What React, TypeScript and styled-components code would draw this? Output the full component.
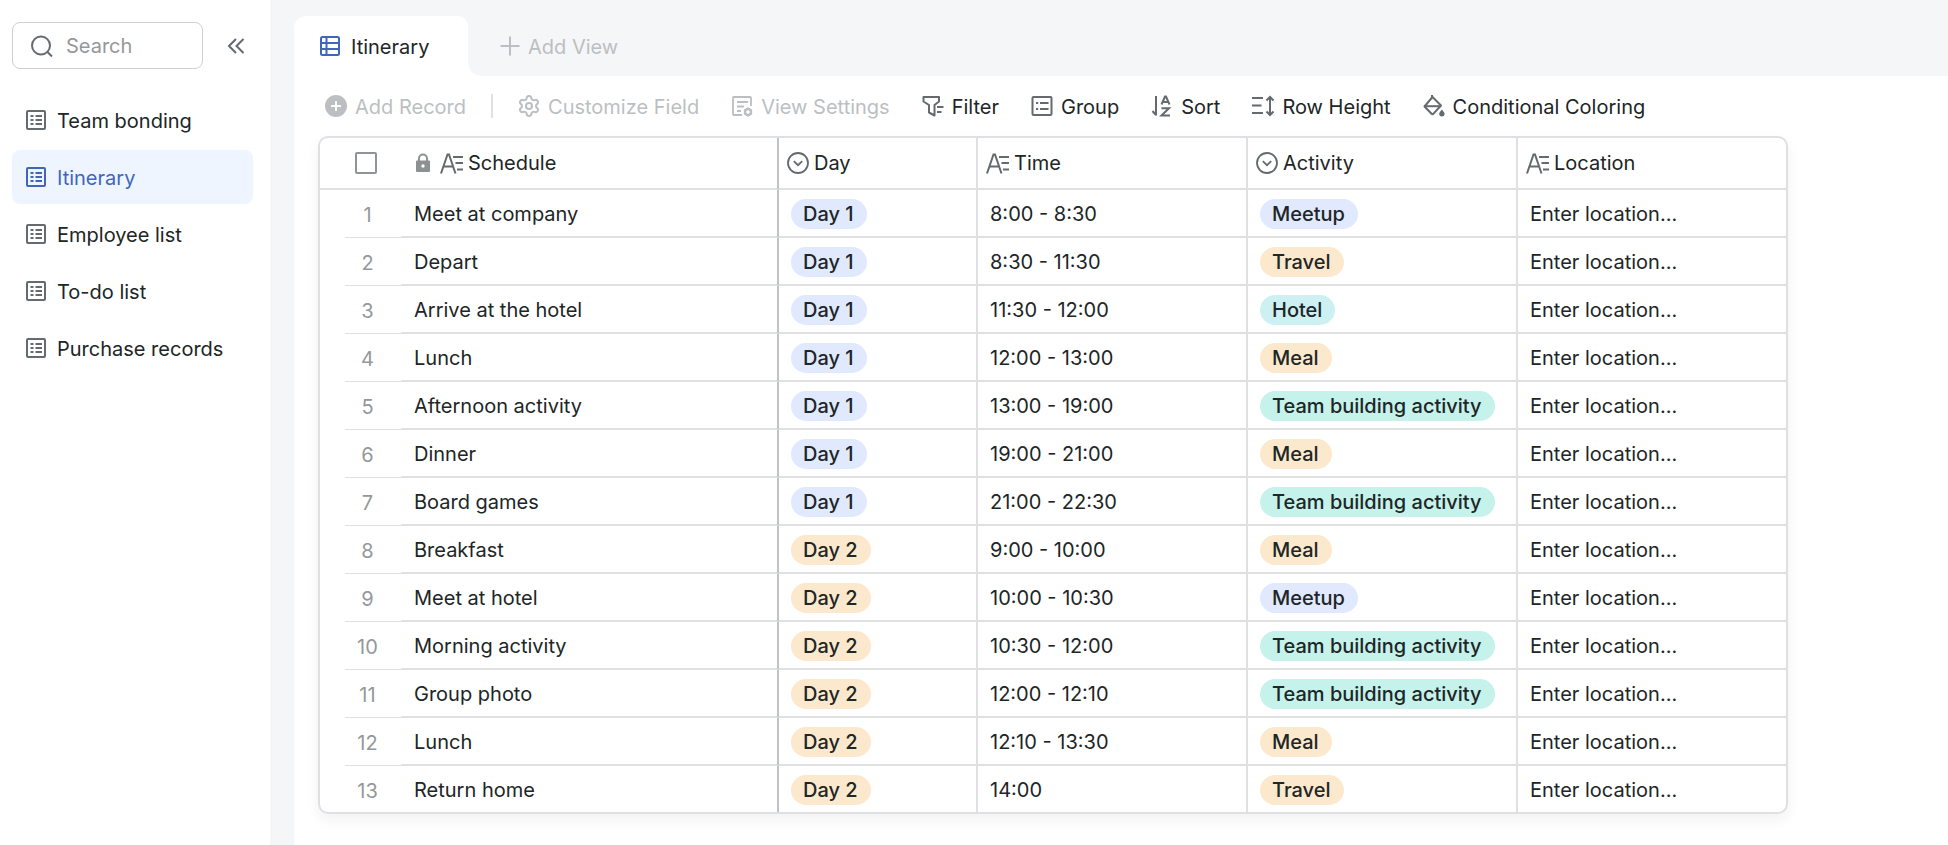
import React from 'react';
import styled, { createGlobalStyle, css } from 'styled-components';
import { Settings } from 'lucide-react';

const ink = '#202526';
const iconGray = '#646a6d';
const muted = '#bbbfc2';
const line = '#dee0e3';
const canvas = '#f5f6f8';
const accent = '#3f66ba';

const GlobalStyle = createGlobalStyle`
  *, *::before, *::after { box-sizing: border-box; }
  body {
    margin: 0;
    background: #fff;
    color: ${ink};
    font-family: Inter, "Liberation Sans", sans-serif;
    font-size: 20px;
    line-height: 24px;
  }
  button, input { font: inherit; color: inherit; }
  button { border: 0; padding: 0; background: none; cursor: pointer; }
  svg { display: block; flex: none; }
`;

const Shell = styled.div`
  display: flex;
  min-height: 100vh;
  background: ${canvas};
`;

const Sidebar = styled.aside`
  flex: none;
  width: 270px;
  padding: 22px 17px 22px 12px;
  background: #fff;
`;

const SearchRow = styled.div`
  display: flex;
  align-items: center;
  gap: 24px;
  color: ${iconGray};
`;

const SearchBox = styled.label`
  display: flex;
  align-items: center;
  gap: 13px;
  width: 191px;
  height: 47px;
  padding: 0 18px;
  border: 1px solid #cdd0d3;
  border-radius: 8px;
`;

const SearchInput = styled.input`
  flex: 1;
  min-width: 0;
  padding: 0;
  border: 0;
  outline: 0;
  background: none;
  &::placeholder { color: #94989b; opacity: 1; }
`;

const NavList = styled.nav`
  display: flex;
  flex-direction: column;
  gap: 3px;
  margin-top: 24px;
`;

const NavLink = styled.a<{ $active?: boolean }>`
  display: flex;
  align-items: center;
  gap: 9px;
  height: 54px;
  padding: 0 12px;
  border-radius: 8px;
  white-space: nowrap;
  text-decoration: none;
  color: ${p => (p.$active ? accent : ink)};
  background: ${p => (p.$active ? '#eff5ff' : 'transparent')};
  svg { color: ${p => (p.$active ? accent : iconGray)}; }
`;

const Label = styled.span`
  padding-top: 2px;
`;

const Main = styled.main`
  display: flex;
  flex-direction: column;
  flex: 1;
  min-width: 0;
  margin-left: 24px;
`;

const TabBar = styled.div`
  display: flex;
  height: 76px;
  padding-top: 16px;
`;

const Tab = styled.button`
  position: relative;
  display: flex;
  align-items: center;
  gap: 11px;
  width: 174px;
  padding: 0 0 0 26px;
  border-radius: 12px 10px 0 0;
  background: #fff;
  svg { color: ${accent}; }
  &::after {
    content: '';
    position: absolute;
    left: 100%;
    bottom: 0;
    width: 12px;
    height: 12px;
    background: radial-gradient(circle at 100% 0, transparent 11px, #fff 12px);
  }
`;

const AddView = styled.button`
  display: flex;
  align-items: center;
  gap: 8px;
  margin-left: 32px;
  color: ${muted};
`;

const Panel = styled.section`
  flex: 1;
  padding: 0 24px 31px;
  background: #fff;
`;

const Toolbar = styled.div`
  display: flex;
  align-items: center;
  gap: 32px;
  height: 60px;
  padding-left: 7px;
`;

const Tool = styled.button<{ $muted?: boolean }>`
  display: flex;
  align-items: center;
  gap: 8px;
  white-space: nowrap;
  color: ${p => (p.$muted ? muted : ink)};
  svg { color: ${p => (p.$muted ? muted : iconGray)}; }
`;

const Divider = styled.span`
  width: 2px;
  height: 24px;
  margin: 0 -7px;
  background: ${line};
`;

const Sheet = styled.div`
  width: 1470px;
  border: 2px solid ${line};
  border-radius: 10px;
  box-shadow: 0 6px 14px rgba(31, 35, 41, 0.06);
  overflow: hidden;
`;

const Grid = styled.table`
  width: 100%;
  table-layout: fixed;
  border-collapse: separate;
  border-spacing: 0;
`;

const cellLines = css<{ $pinned?: boolean }>`
  border-bottom: 2px solid ${line};
  border-right: 2px solid ${p => (p.$pinned ? '#bfc3c6' : line)};
  &:last-child { border-right: 0; }
`;

const HeadCell = styled.th<{ $pinned?: boolean; $indent?: boolean }>`
  ${cellLines}
  height: 52px;
  padding: 0 0 0 ${p => (p.$indent ? 14 : 8)}px;
  font-weight: 400;
  text-align: left;
`;

const HeadLabel = styled.span`
  display: flex;
  align-items: center;
  gap: 5px;
  svg { color: ${iconGray}; }
`;

const LockSlot = styled.span`
  display: flex;
  margin-right: 4px;
  && svg { color: #8c9192; }
`;

const CheckCell = styled.th`
  height: 52px;
  padding: 0 0 0 35px;
  border-bottom: 2px solid ${line};
`;

const Check = styled.input`
  display: block;
  appearance: none;
  width: 22px;
  height: 22px;
  margin: 0;
  border: 2px solid #8f9596;
  border-radius: 2px;
`;

const Row = styled.tr`
  &:last-child > * { border-bottom: 0; height: 46px; }
  &:last-child > * > div { border-bottom: 0; height: 46px; }
`;

const NumberCell = styled.th`
  padding: 0 0 0 25px;
  font-weight: 400;
`;

const NumberBox = styled.div`
  height: 48px;
  padding: 13px 11px 0 0;
  border-bottom: 1px solid ${line};
  text-align: center;
  color: #94989b;
`;

const Cell = styled.td<{ $pinned?: boolean }>`
  ${cellLines}
  height: 48px;
  padding: 2px 0 0 ${p => (p.$pinned ? 13 : 12)}px;
  white-space: nowrap;
`;

const tones = {
  blue: '#e0e9fe',
  orange: '#fce9cd',
  cyan: '#cdf1f3',
  teal: '#c5f2ea',
};
type Tone = keyof typeof tones;

const Pill = styled.span<{ $tone: Tone }>`
  display: block;
  width: fit-content;
  height: 30px;
  padding: 0 13px 0 12px;
  border-radius: 15px;
  line-height: 30px;
  font-weight: 500;
  background: ${p => tones[p.$tone]};
`;

const Stroke = ({ size = 22, w = 2, children }: { size?: number; w?: number; children: React.ReactNode }) => (
  <svg width={size} height={size} viewBox={`0 0 ${size} ${size}`} fill="none" stroke="currentColor" strokeWidth={w} aria-hidden="true">
    {children}
  </svg>
);

const SearchIcon = () => (
  <Stroke>
    <circle cx="10" cy="10.500" r="9" />
    <path d="M16.500 17l4.500 4.500" />
  </Stroke>
);
const CollapseIcon = () => (
  <Stroke size={18}>
    <path d="M9 2L2 9l7 7M16.500 2l-7 7 7 7" />
  </Stroke>
);
const ListIcon = () => (
  <Stroke size={24}>
    <rect x="3" y="3" width="18" height="18" rx="1" />
    <path d="M6.500 8h3M6.500 12h3M6.500 16h3M11.500 8h6.500M11.500 12h6.500M11.500 16h6.500" />
  </Stroke>
);
const GridIcon = () => (
  <Stroke size={20}>
    <rect x="1" y="1" width="18" height="18" rx="1.500" />
    <path d="M1 7h18M1 13h18M6.500 1v18" />
  </Stroke>
);
const PlusIcon = () => (
  <Stroke size={20}>
    <path d="M10 .5v19M.5 10h19" />
  </Stroke>
);
const AddIcon = () => (
  <Stroke>
    <circle cx="11" cy="11" r="11" fill="currentColor" stroke="none" />
    <path d="M11 6v10M6 11h10" stroke="#fff" />
  </Stroke>
);
const GearIcon = () => <Settings size={22} viewBox="1 1 22 22" strokeWidth={2} aria-hidden="true" />;
const ViewIcon = () => (
  <Stroke w={1.8}>
    <path d="M20 11V3a1 1 0 0 0-1-1H3a1 1 0 0 0-1 1v16a1 1 0 0 0 1 1h8" />
    <path d="M6 7h11M6 11.500h7M6 16h4" />
    <circle cx="17" cy="17" r="3" strokeWidth="2.400" />
    <path d="M17 12.400v2M17 19.600v2M13 14.700l1.700 1M19.300 18.300l1.700 1M13 19.300l1.700-1M19.300 15.700l1.700-1" />
  </Stroke>
);
const FilterIcon = () => (
  <Stroke>
    <path d="M1.500 2h15.500v4.500l-4.500 3.500v10.500l-5.500-3v-7.500l-5.500-3.500z" strokeLinejoin="round" />
    <path d="M15 12h6.500M15 17h4.500" />
  </Stroke>
);
const GroupIcon = () => (
  <Stroke>
    <rect x="1.500" y="2" width="19" height="18" rx="1" />
    <path d="M5 8h2.200M9 8h8.500M5 14h2.200M9 14h8.500" />
  </Stroke>
);
const SortIcon = () => (
  <Stroke>
    <path d="M5 1v19.500M1.500 16l3.500 4" />
    <path d="M10.500 9.500L14 1.500h1l3.500 8M11.800 7h5.400M10.500 13.300H18l-7.500 7.200h8.500" />
  </Stroke>
);
const HeightIcon = () => (
  <Stroke>
    <path d="M0 3h11M0 10.500h9.500M0 18h11M18 2v18M14.500 5.500L18 2l3.500 3.500M14.500 16.500L18 20l3.500-3.500" />
  </Stroke>
);
const ColorIcon = () => (
  <Stroke>
    <path d="M9 0v2.500M9.500 2L18 10.500l-7.500 8.200a1.500 1.500 0 0 1-2 0L1.500 11.500z" strokeLinejoin="round" />
    <path d="M1.500 11.200h16.500" />
    <path d="M18.800 14.500c1.600 2 2.800 3 2.800 4.300a2.700 2.700 0 0 1-5.400 0c0-1.300 1.200-2.300 2.600-4.300z" fill="currentColor" stroke="none" />
  </Stroke>
);
const TextFieldIcon = () => (
  <Stroke size={23}>
    <path d="M1 21.500L7.500 2.500h1.500l6.500 19M3.500 14.500h9.500M13 5h10M15.500 11H23M17 17.500h6" />
  </Stroke>
);
const SelectIcon = () => (
  <Stroke w={1.8}>
    <circle cx="11" cy="11" r="10" />
    <path d="M6.800 9.200L11 13.200l4.200-4" />
  </Stroke>
);
const LockIcon = () => (
  <svg width="16" height="20" viewBox="0 0 16 20" fill="none" aria-hidden="true">
    <path d="M4 9V5.500a4 4 0 0 1 8 0V9" stroke="currentColor" strokeWidth="2" />
    <rect x="1" y="7.500" width="14" height="11.500" rx="1" fill="currentColor" />
    <circle cx="8" cy="13" r="1.700" fill="#fff" />
  </svg>
);

const sheets = ['Team bonding', 'Itinerary', 'Employee list', 'To-do list', 'Purchase records'];

const activityTones: Record<string, Tone> = {
  Meetup: 'blue',
  Travel: 'orange',
  Hotel: 'cyan',
  Meal: 'orange',
  'Team building activity': 'teal',
};

const records: [string, number, string, string][] = [
  ['Meet at company', 1, '8:00 - 8:30', 'Meetup'],
  ['Depart', 1, '8:30 - 11:30', 'Travel'],
  ['Arrive at the hotel', 1, '11:30 - 12:00', 'Hotel'],
  ['Lunch', 1, '12:00 - 13:00', 'Meal'],
  ['Afternoon activity', 1, '13:00 - 19:00', 'Team building activity'],
  ['Dinner', 1, '19:00 - 21:00', 'Meal'],
  ['Board games', 1, '21:00 - 22:30', 'Team building activity'],
  ['Breakfast', 2, '9:00 - 10:00', 'Meal'],
  ['Meet at hotel', 2, '10:00 - 10:30', 'Meetup'],
  ['Morning activity', 2, '10:30 - 12:00', 'Team building activity'],
  ['Group photo', 2, '12:00 - 12:10', 'Team building activity'],
  ['Lunch', 2, '12:10 - 13:30', 'Meal'],
  ['Return home', 2, '14:00', 'Travel'],
];

export default function App() {
  return (
    <Shell>
      <GlobalStyle />
      <Sidebar>
        <SearchRow>
          <SearchBox>
            <SearchIcon />
            <SearchInput type="text" placeholder="Search" aria-label="Search" />
          </SearchBox>
          <button type="button" aria-label="Collapse sidebar"><CollapseIcon /></button>
        </SearchRow>
        <NavList>
          {sheets.map(name => (
            <NavLink key={name} href="#" $active={name === 'Itinerary'}>
              <ListIcon />
              <Label>{name}</Label>
            </NavLink>
          ))}
        </NavList>
      </Sidebar>
      <Main>
        <TabBar>
          <Tab type="button"><GridIcon /><Label>Itinerary</Label></Tab>
          <AddView type="button"><PlusIcon /><Label>Add View</Label></AddView>
        </TabBar>
        <Panel>
          <Toolbar>
            <Tool type="button" $muted><AddIcon /><Label>Add Record</Label></Tool>
            <Divider />
            <Tool type="button" $muted><GearIcon /><Label>Customize Field</Label></Tool>
            <Tool type="button" $muted><ViewIcon /><Label>View Settings</Label></Tool>
            <Tool type="button"><FilterIcon /><Label>Filter</Label></Tool>
            <Tool type="button"><GroupIcon /><Label>Group</Label></Tool>
            <Tool type="button"><SortIcon /><Label>Sort</Label></Tool>
            <Tool type="button"><HeightIcon /><Label>Row Height</Label></Tool>
            <Tool type="button"><ColorIcon /><Label>Conditional Coloring</Label></Tool>
          </Toolbar>
          <Sheet>
            <Grid>
              <colgroup>
                <col width="81" />
                <col width="378" />
                <col width="199" />
                <col width="270" />
                <col width="270" />
                <col />
              </colgroup>
              <thead>
                <tr>
                  <CheckCell><Check type="checkbox" aria-label="Select all records" /></CheckCell>
                  <HeadCell $pinned $indent>
                    <HeadLabel><LockSlot><LockIcon /></LockSlot><TextFieldIcon />Schedule</HeadLabel>
                  </HeadCell>
                  <HeadCell><HeadLabel><SelectIcon />Day</HeadLabel></HeadCell>
                  <HeadCell><HeadLabel><TextFieldIcon />Time</HeadLabel></HeadCell>
                  <HeadCell><HeadLabel><SelectIcon />Activity</HeadLabel></HeadCell>
                  <HeadCell><HeadLabel><TextFieldIcon />Location</HeadLabel></HeadCell>
                </tr>
              </thead>
              <tbody>
                {records.map(([title, day, time, activity], i) => (
                  <Row key={i}>
                    <NumberCell scope="row"><NumberBox>{i + 1}</NumberBox></NumberCell>
                    <Cell $pinned>{title}</Cell>
                    <Cell><Pill $tone={day === 1 ? 'blue' : 'orange'}>Day {day}</Pill></Cell>
                    <Cell>{time}</Cell>
                    <Cell><Pill $tone={activityTones[activity]}>{activity}</Pill></Cell>
                    <Cell>Enter location...</Cell>
                  </Row>
                ))}
              </tbody>
            </Grid>
          </Sheet>
        </Panel>
      </Main>
    </Shell>
  );
}
